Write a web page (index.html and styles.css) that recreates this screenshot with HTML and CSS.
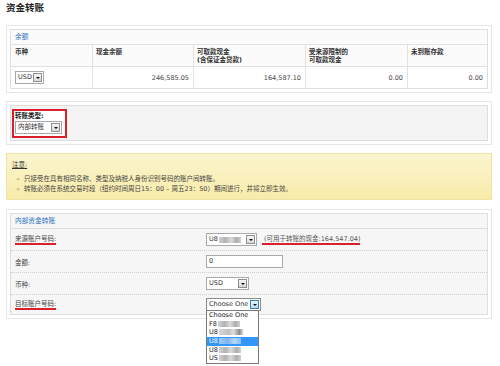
FILE: index.html
```html
<!DOCTYPE html>
<html lang="zh-CN">
<head>
  <meta charset="UTF-8" />
  <title>资金转账</title>
  <link rel="stylesheet" href="styles.css">
</head>
<body>

  <h1 class="page-title">资金转账</h1>

  <!-- Balance -->
  <div class="panel">
    <div class="panel-inner balance">
      <div class="panel-head">余额</div>
      <div class="bal-grid">
        <div class="th">币种</div>
        <div class="th">现金余额</div>
        <div class="th">可取款现金<br>(含保证金贷款)</div>
        <div class="th">受来源限制的<br>可取款现金</div>
        <div class="th">未到账存款</div>

        <div class="td"><span class="sel sel-usd-sm"><span class="sel-text">USD</span><span class="sel-btn"></span></span></div>
        <div class="td num">246,585.05</div>
        <div class="td num">164,587.10</div>
        <div class="td num">0.00</div>
        <div class="td num">0.00</div>
      </div>
    </div>
  </div>

  <!-- Transfer type -->
  <div class="panel">
    <div class="panel-inner type-box">
      <div class="mark-box">
        <div class="type-label">转账类型:</div>
        <span class="sel sel-type"><span class="sel-text">内部转账</span><span class="sel-btn"></span></span>
      </div>
    </div>
  </div>

  <!-- Notes -->
  <div class="note">
    <div class="note-title">注意:</div>
    <ul class="note-list">
      <li>只接受在具有相同名称、类型及纳税人身份识别号码的账户间转账。</li>
      <li>转账必须在系统交易时段（纽约时间周日15：00 – 周五23：50）期间进行，并将立即生效。</li>
    </ul>
  </div>

  <!-- Internal transfer -->
  <div class="panel">
    <div class="panel-inner form-box">
      <div class="panel-head">内部资金转账</div>

      <div class="form-row first">
        <div class="label"><span class="mark-line">来源账户号码:</span></div>
        <span class="sel sel-src"><span class="sel-text">U8<span class="blur"></span></span><span class="sel-btn"></span></span>
        <span class="avail mark-line">(可用于转账的现金:164,547.04)</span>
      </div>

      <div class="form-row">
        <div class="label">金额:</div>
        <span class="inp">0</span>
      </div>

      <div class="form-row">
        <div class="label">币种:</div>
        <span class="sel sel-usd"><span class="sel-text">USD</span><span class="sel-btn"></span></span>
      </div>

      <div class="form-row last">
        <div class="label"><span class="mark-line">目标账户号码:</span></div>
        <span class="sel sel-choose"><span class="sel-text">Choose One</span><span class="sel-btn focus"></span></span>
        <div class="dropdown">
          <div class="opt">Choose One</div>
          <div class="opt">F8<span class="blur"></span></div>
          <div class="opt">U8<span class="blur short"></span></div>
          <div class="opt active">U8<span class="blur"></span></div>
          <div class="opt">U8<span class="blur"></span></div>
          <div class="opt">US<span class="blur"></span></div>
        </div>
      </div>
    </div>
  </div>

</body>
</html>
```

FILE: styles.css
```css
* {
  box-sizing: border-box;
  margin: 0;
  padding: 0;
}
body {
  font-family: 'DejaVu Sans', 'Noto Sans CJK SC', sans-serif;
  font-size: 6.5px;
  color: #333;
  background: #fff;
  width: 500px;
  min-height: 366px;
}

.page-title {
  height: 25px;
  padding: 2px 0 0 6px;
  font-size: 9.5px;
  line-height: 12px;
  font-weight: bold;
  color: #222;
}

/* Panels */
.panel {
  margin: 0 8px 8px 6px;
  border: 1px solid #e6e6e6;
  padding: 3px;
  background: #fff;
}
.panel-inner {
  border: 1px solid #dedede;
}
.panel-head {
  height: 14px;
  line-height: 14px;
  padding-left: 4px;
  color: #2d6fc2;
  font-size: 6.7px;
}

/* Balance table */
.balance {
  background: #fbfbfb;
}
.bal-grid {
  display: grid;
  grid-template-columns: 81px 101px 112px 102px 1fr;
}
.bal-grid > div {
  border-top: 1px solid #e2e2e2;
  border-left: 1px solid #e2e2e2;
  padding: 0 4px 0 3px;
}
.bal-grid > div:nth-child(5n+1) {
  border-left: none;
  padding-left: 4px;
}
.th {
  height: 22px;
  padding-top: 4px !important;
  line-height: 7.5px;
  font-weight: bold;
  color: #333;
}
.td {
  height: 22px;
  display: flex;
  align-items: center;
  background: #fff;
}
.td.num {
  justify-content: flex-end;
  color: #444444;
}

/* Select boxes */
.sel {
  display: inline-flex;
  align-items: center;
  height: 13px;
  border: 1px solid #a9a9a9;
  background: #fff;
  padding-left: 2px;
  color: #333;
  line-height: 11px;
}
.sel-text {
  display: inline-flex;
  align-items: center;
  white-space: nowrap;
}
.sel-btn {
  position: relative;
  margin-left: auto;
  margin-right: 1px;
  width: 9px;
  height: 9px;
  border: 1px solid #8f8f8f;
  background: linear-gradient(#f6f6f6, #d8d8d8);
}
.sel-btn::after {
  content: "";
  position: absolute;
  left: 2px;
  top: 3px;
  border-left: 2px solid transparent;
  border-right: 2px solid transparent;
  border-top: 2px solid #111;
}
.sel-btn.focus {
  border-color: #3c7fb1;
  background: linear-gradient(#e6f3fc, #b7dcf5);
}
.sel-usd-sm { width: 29px; }
.sel-type { width: 47px; margin-top: 1px; }
.sel-src { width: 51px; }
.sel-usd { width: 43px; }
.sel-choose { width: 55px; border-color: #8c8c8c; }

.blur {
  display: inline-block;
  width: 22px;
  height: 6px;
  margin-left: 1px;
  background: linear-gradient(90deg, #d2d2d2, #b3b3b3 30%, #dadada 55%, #aeaeae 80%, #d0d0d0);
  filter: blur(0.6px);
}
.blur.short {
  width: 24px;
  background: linear-gradient(90deg, #d8d8d8, #c0c0c0 40%, #dedede 60%, #8e8e8e 85%, #d8d8d8);
}

/* Transfer type box */
.type-box {
  background: #f4f4f4;
  padding: 3px 1px 2px;
}
.mark-box {
  display: inline-block;
  border: 2px solid #d9202b;
  padding: 1px 3px 2px 1px;
  background: #fff;
}
.type-label {
  line-height: 8px;
  font-weight: bold;
  color: #222;
}

/* Note */
.note {
  margin: 0 8px 9px 6px;
  border: 1px solid #efe2a6;
  background: linear-gradient(#fbf5cf, #f7eba9);
  padding: 6px 5px 5px 5px;
}
.note-title {
  line-height: 10px;
  text-decoration: underline;
  color: #333333;
}
.note-list {
  list-style: none;
  margin-top: 4px;
}
.note-list li {
  line-height: 10px;
  color: #444;
  padding-left: 12px;
  position: relative;
}
.note-list li::before {
  content: "»";
  position: absolute;
  left: 4px;
  color: #a9a27a;
}

/* Internal transfer form */
.form-box {
  background: #f6f6f6;
}
.form-row {
  display: flex;
  align-items: center;
  height: 22px;
  border-top: 1px dotted #cfcfcf;
}
.form-row.first {
  border-top: 1px solid #dedede;
}
.form-row.last {
  position: relative;
  height: 20px;
}
.label {
  width: 195px;
  padding-left: 4px;
  color: #444;
}
.mark-line {
  display: inline-block;
  line-height: 8px;
  border-bottom: 2px solid #d9202b;
}
.avail {
  margin-left: 5px;
  color: #555;
  padding-left: 2px;
}
.inp {
  display: inline-block;
  width: 77px;
  height: 13px;
  line-height: 11px;
  border: 1px solid #a9a9a9;
  background: #fff;
  padding-left: 2px;
}

/* Open dropdown list */
.dropdown {
  position: absolute;
  left: 195px;
  top: 15px;
  width: 53px;
  border: 1px solid #7a7a7a;
  background: #fff;
  z-index: 2;
}
.opt {
  height: 8.7px;
  line-height: 8.7px;
  padding-left: 2px;
  color: #222;
  white-space: nowrap;
}
.opt .blur {
  vertical-align: -1px;
}
.opt.active {
  background: #3396fc;
  color: #fff;
}
.opt.active .blur {
  background: linear-gradient(90deg, #9fcaf5, #7fb6ee 40%, #b5d6f7 70%, #8abdf0);
}
```
